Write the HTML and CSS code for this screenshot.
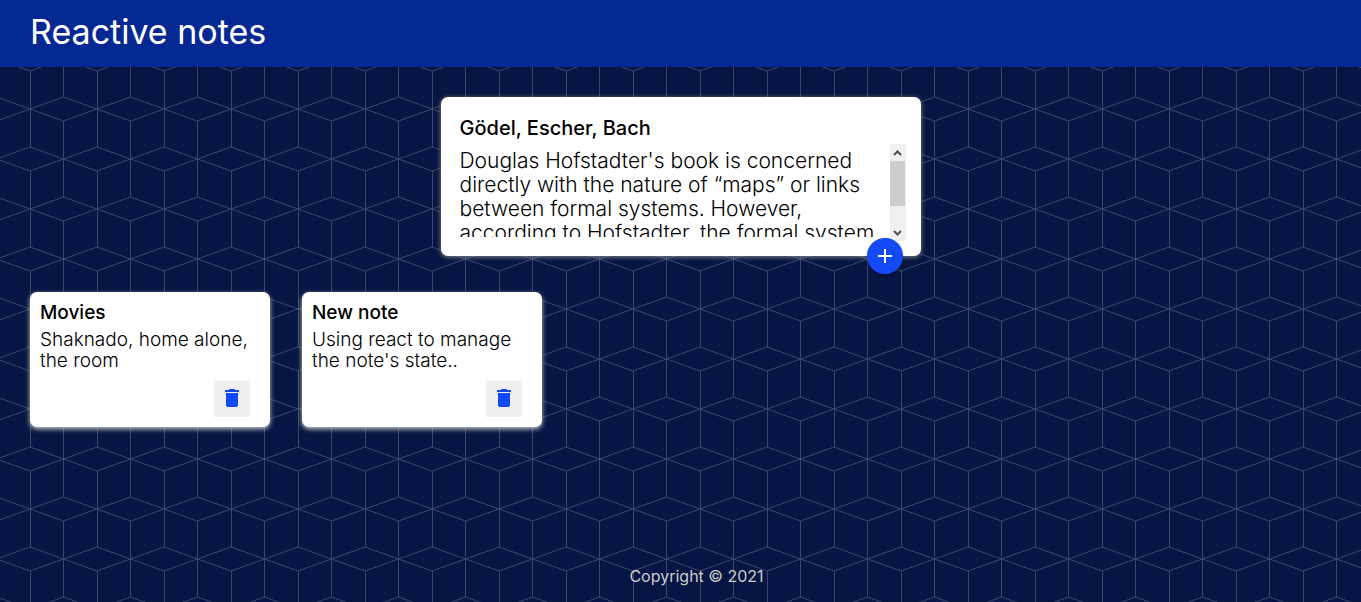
FILE: index.html
```html
<!DOCTYPE html>
<html lang="en">
<head>
<meta charset="utf-8">
<meta name="viewport" content="width=device-width, initial-scale=1">
<title>Reactive notes</title>
<link rel="stylesheet" href="styles.css">
</head>
<body>
<header class="header"><h1 class="header-title">Reactive notes</h1></header>
<main class="main">
  <form class="composer">
    <input class="composer-title" type="text" aria-label="Title" value="Gödel, Escher, Bach">
    <div class="composer-body">
      <textarea class="composer-text" aria-label="Take a note" rows="3">Douglas Hofstadter's book is concerned directly with the nature of “maps” or links between formal systems. However, according to Hofstadter, the formal system</textarea>
      <div class="scrollbar" aria-hidden="true">
        <svg class="scrollbar-arrow" viewBox="0 0 16 17"><path d="M4 11 7.500 7.500 11 11" fill="none" stroke="#505050" stroke-width="2"/></svg>
        <div class="scrollbar-thumb"></div>
        <svg class="scrollbar-arrow" viewBox="0 0 16 17"><path d="M4 7 7.500 10.500 11 7" fill="none" stroke="#505050" stroke-width="2"/></svg>
      </div>
    </div>
    <button class="add-button" type="button" aria-label="Add note">
      <svg class="icon" viewBox="0 0 24 24"><path d="M19 13h-6v6h-2v-6H5v-2h6V5h2v6h6v2z"/></svg>
    </button>
  </form>
  <section class="notes">
    <article class="note">
      <h2 class="note-title">Movies</h2>
      <p class="note-text">Shaknado, home alone, the room</p>
      <button class="delete-button" type="button" aria-label="Delete Movies">
        <svg class="icon" viewBox="0 0 24 24"><path d="M6 19c0 1.100.9 2 2 2h8c1.100 0 2-.9 2-2V7H6v12zM19 4h-3.500l-1-1h-5l-1 1H5v2h14V4z"/></svg>
      </button>
    </article>
    <article class="note">
      <h2 class="note-title">New note</h2>
      <p class="note-text">Using react to manage the note's state..</p>
      <button class="delete-button" type="button" aria-label="Delete New note">
        <svg class="icon" viewBox="0 0 24 24"><path d="M6 19c0 1.100.9 2 2 2h8c1.100 0 2-.9 2-2V7H6v12zM19 4h-3.500l-1-1h-5l-1 1H5v2h14V4z"/></svg>
      </button>
    </article>
  </section>
</main>
<footer class="footer"><p class="footer-text">Copyright © 2021</p></footer>
</body>
</html>
```

FILE: styles.css
```css
* {
  box-sizing: border-box;
  margin: 0;
}

body {
  display: flex;
  flex-direction: column;
  min-height: 100vh;
  font-family: Inter, "Open Sans", sans-serif;
  background-color: #061543;
  background-image: url("data:image/svg+xml,%3Csvg xmlns='http://www.w3.org/2000/svg' width='67' height='100'%3E%3Cpath d='M.5 0V38M.5 62V100M33.5 12V88M0 0L33.500 12L67 0M0 100L33.500 88L67 100M0 38L33.500 50L0 62M67 38L33.500 50L67 62' fill='none' stroke='%233a466b' stroke-width='1'/%3E%3C/svg%3E");
  background-position: 30px 9px;
}

.header {
  padding: 12px 30px 15px;
  background: #062893;
}

.header-title {
  font-size: 34px;
  font-weight: 400;
  line-height: 40px;
  color: #fff;
}

.main {
  flex: 1;
}

.composer {
  position: relative;
  width: 480px;
  max-width: 100%;
  margin: 30px auto 20px;
  padding: 15px 15px 15px 19px;
  border-radius: 7px;
  background: #fff;
  box-shadow: 0 1px 5px #8a8989;
}

.composer-title {
  display: block;
  width: 100%;
  padding: 4px 0;
  border: 0;
  outline: 0;
  background: transparent;
  font: 500 20px/24px Inter, "Open Sans", sans-serif;
  color: #000;
}

.composer-body {
  display: flex;
  align-items: flex-start;
}

.composer-text {
  flex: 1;
  min-width: 0;
  height: 93px;
  padding: 5px 4px 0 0;
  border: 0;
  outline: 0;
  resize: none;
  overflow: hidden;
  background: transparent;
  font: 300 21px/24px Inter, "Open Sans", sans-serif;
  color: #000;
}

.scrollbar {
  display: flex;
  flex-direction: column;
  justify-content: space-between;
  width: 16px;
  height: 97px;
  background: #f0f0f0;
}

.scrollbar-arrow {
  width: 16px;
  height: 17px;
}

.scrollbar-thumb {
  width: 15px;
  height: 45px;
  margin-bottom: auto;
  background: #cdcdcd;
}

.add-button {
  position: absolute;
  right: 18px;
  bottom: -18px;
  display: grid;
  place-items: center;
  width: 36px;
  height: 36px;
  padding: 0;
  border: 0;
  border-radius: 50%;
  background: #1449f8;
  color: #fff;
  box-shadow: 0 1px 3px rgba(0, 0, 0, 0.3);
}

.icon {
  width: 24px;
  height: 24px;
  fill: currentColor;
}

.notes {
  display: flex;
  flex-wrap: wrap;
  gap: 32px;
  padding: 16px 30px;
}

.note {
  display: flex;
  flex-direction: column;
  width: 240px;
  padding: 10px;
  border-radius: 7px;
  background: #fff;
  box-shadow: 0 2px 5px #ccc;
}

.note-title {
  margin-bottom: 5px;
  font-size: 19px;
  font-weight: 500;
  line-height: 22px;
}

.note-text {
  margin-bottom: 10px;
  font-size: 19px;
  font-weight: 300;
  line-height: 21px;
}

.delete-button {
  display: grid;
  place-items: center;
  align-self: flex-end;
  width: 36px;
  height: 36px;
  margin-right: 10px;
  padding: 0 0 2px;
  border: 0;
  background: #efefef;
  color: #1449f8;
}

.footer {
  padding: 0 0 16px 32px;
  text-align: center;
}

.footer-text {
  font-size: 16px;
  line-height: 20px;
  color: #ccc;
}
```
